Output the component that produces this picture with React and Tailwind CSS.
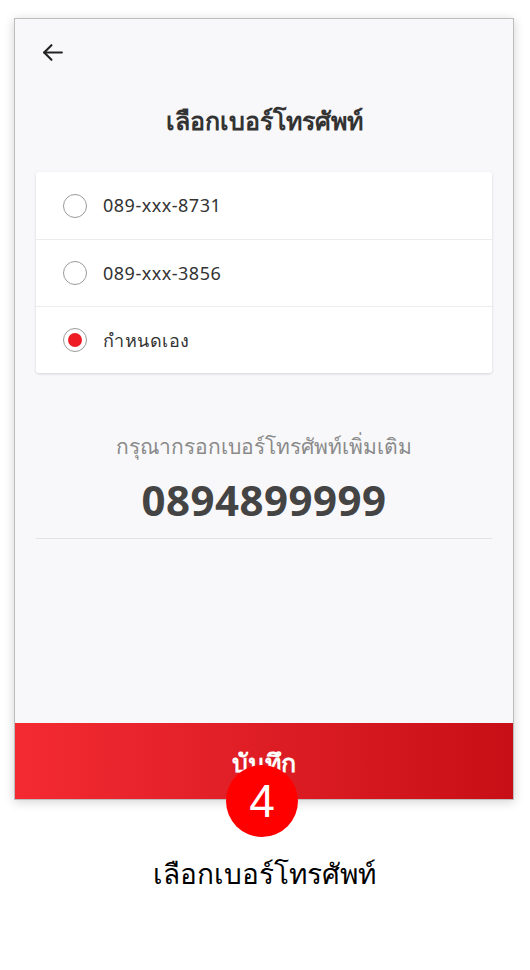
import React, { useState } from 'react';

const options = [
    { id: 'a', label: '089-xxx-8731' },
    { id: 'b', label: '089-xxx-3856' },
    { id: 'c', label: 'กำหนดเอง' },
];

const Radio = ({ checked }) => (
    <span className="flex h-[24px] w-[24px] shrink-0 items-center justify-center rounded-full border-[1.5px] border-[#9a9a9a] bg-white">
        {checked && <span className="h-[14px] w-[14px] rounded-full bg-[#ee1c25]" />}
    </span>
);

const App = () => {
    const [selected, setSelected] = useState('c');

    return (
        <div className="min-h-[970px] w-[530px] bg-white font-['Noto_Sans','DejaVu_Sans',sans-serif]">
            <div className="pl-[14px] pt-[18px]">
                {/* Phone frame */}
                <div className="relative flex h-[782px] w-[500px] flex-col border border-[#bdbdbd] bg-[#f8f8fa] shadow-[0_2px_10px_rgba(0,0,0,0.18)]">
                    {/* Back */}
                    <div className="px-[25px] pt-[21px]">
                        <svg width="25" height="25" viewBox="0 0 24 24" fill="none" stroke="#222" strokeWidth="2" strokeLinecap="round" strokeLinejoin="round">
                            <path d="M21 12H4" />
                            <path d="M11 5l-7 7 7 7" />
                        </svg>
                    </div>

                    <h1 className="mt-[38px] text-center text-[25px] font-bold leading-[34px] text-[#333]">
                        เลือกเบอร์โทรศัพท์
                    </h1>

                    {/* Options */}
                    <div className="mx-[21px] mt-[35px] rounded-[3px] bg-white shadow-[0_1px_3px_rgba(0,0,0,0.15)]">
                        {options.map((opt, idx) => (
                            <button
                                key={opt.id}
                                onClick={() => setSelected(opt.id)}
                                className={`flex h-[67px] w-full items-center gap-[16px] px-[27px] text-left ${idx > 0 ? 'border-t border-[#ececec]' : ''}`}
                            >
                                <Radio checked={selected === opt.id} />
                                <span className="text-[18px] tracking-[0.5px] text-[#333]">{opt.label}</span>
                            </button>
                        ))}
                    </div>

                    {/* Custom number */}
                    <p className="mt-[58px] text-center text-[21px] text-[#8a8a8a]">
                        กรุณากรอกเบอร์โทรศัพท์เพิ่มเติม
                    </p>
                    <p className="mt-[12px] text-center text-[42px] font-bold leading-[50px] tracking-[0.5px] text-[#444]">
                        0894899999
                    </p>
                    <div className="mx-[21px] mt-[13px] border-t border-[#e3e3e3]" />

                    <div className="flex-1" />

                    {/* Save */}
                    <button className="h-[76px] w-full bg-gradient-to-r from-[#f42a32] to-[#c80e16] pt-[4px] text-[25px] font-bold text-white">
                        บันทึก
                    </button>

                    {/* Step badge */}
                    <div className="absolute bottom-[-38px] left-[211px] flex h-[72px] w-[72px] items-center justify-center rounded-full bg-[#ff0000] font-['Liberation_Sans',sans-serif] text-[46px] leading-none text-white">
                        4
                    </div>
                </div>

                <p className="mt-[52px] w-[500px] text-center text-[28px] text-black">
                    เลือกเบอร์โทรศัพท์
                </p>
            </div>
        </div>
    );
};

export default App;
